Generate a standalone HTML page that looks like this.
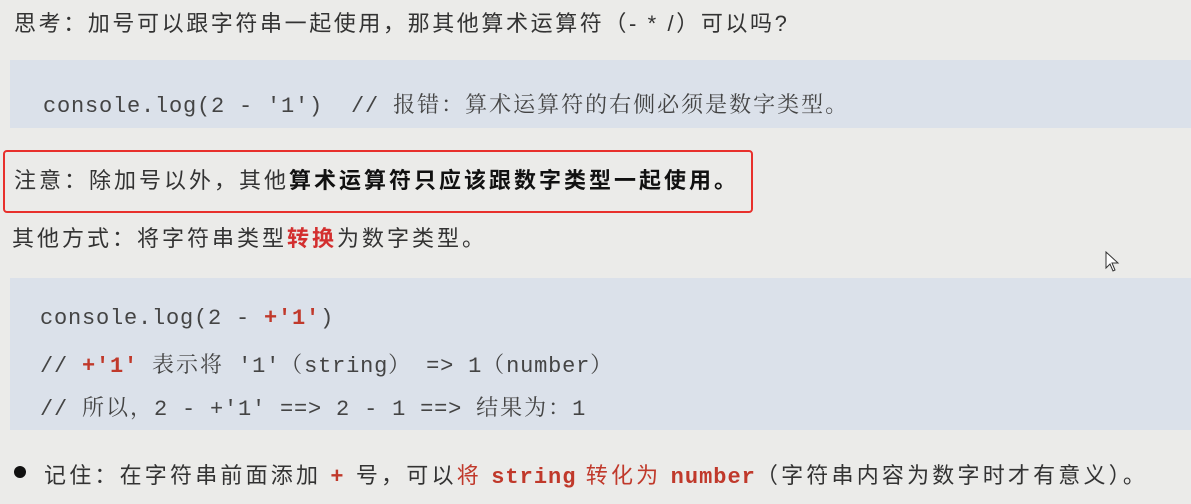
<!DOCTYPE html>
<html><head><meta charset="utf-8"><style>
body{margin:0;width:1191px;height:504px;background:#ebebe9;position:relative;overflow:hidden;font-family:"Liberation Sans","Noto Sans CJK SC",sans-serif;color:#333;}
.t{position:absolute;white-space:nowrap;font-size:22px;letter-spacing:2.6px;}
.code{position:absolute;left:10px;right:0;background:#dbe1ea;}
.m{position:absolute;white-space:pre;font-family:"Liberation Mono","Noto Serif CJK SC",monospace;font-size:22px;letter-spacing:0.8px;color:#444;}
.c{letter-spacing:2px;}
.r{color:#c0392b;font-weight:bold;}
.box{position:absolute;left:3px;top:150px;width:746px;height:59px;border:2px solid #e8302c;border-radius:4px;}
</style></head><body>
<div class="t" style="left:14px;top:6px;">思考：加号可以跟字符串一起使用，那其他算术运算符（- * /）可以吗?</div>
<div class="code" style="top:60px;height:68px;"></div>
<div class="m" style="left:43px;top:88px;">console.log(2 - '1')  // <span class="c">报错：算术运算符的右侧必须是数字类型。</span></div>
<div class="box"></div>
<div class="t" style="left:14px;top:163px;letter-spacing:3px">注意：除加号以外，其他<b style="color:#111">算术运算符只应该跟数字类型一起使用。</b></div>
<div class="t" style="left:12px;top:221px;letter-spacing:3px">其他方式：将字符串类型<b style="color:#d32f2f">转换</b>为数字类型。</div>
<div class="code" style="top:278px;height:152px;"></div>
<div class="m" style="left:40px;top:306px;">console.log(2 - <span class="r">+'1'</span>)</div>
<div class="m" style="left:40px;top:348px;">// <span class="r">+'1'</span> <span class="c">表示将</span> '1'<span class="c">（</span>string<span class="c">）</span> => 1<span class="c">（</span>number<span class="c">）</span></div>
<div class="m" style="left:40px;top:391px;">// <span class="c">所以，</span>2 - +'1' ==> 2 - 1 ==> <span class="c">结果为：</span>1</div>
<div style="position:absolute;left:14px;top:466px;width:12px;height:12px;border-radius:50%;background:#111;"></div>
<div class="t" style="left:44px;top:458px;letter-spacing:3.2px">记住：在字符串前面添加 <b style="color:#c0392b">+</b> 号，可以<span style="color:#c0392b">将 <b style="font-family:'Liberation Mono',monospace;letter-spacing:1px">string</b> 转化为 <b style="font-family:'Liberation Mono',monospace;letter-spacing:1px">number</b></span>（字符串内容为数字时才有意义）。</div>
<svg style="position:absolute;left:1105px;top:251px" width="16" height="22" viewBox="0 0 16 22"><path d="M1 1 L1 17 L5 13 L8 20 L10 19 L7 12 L13 12 Z" fill="#fff" stroke="#333" stroke-width="1"/></svg>
</body></html>
